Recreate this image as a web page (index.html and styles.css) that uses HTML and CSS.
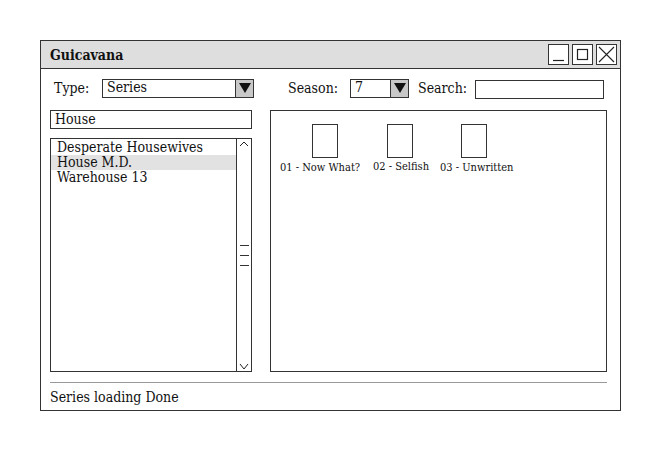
FILE: index.html
```html
<!DOCTYPE html>
<html>
<head>
<meta charset="utf-8">
<link rel="stylesheet" href="styles.css">
</head>
<body>
<div class="window">
  <div class="titlebar">
    <span class="title">Guicavana</span>
    <div class="wbtns">
      <span class="wbtn"><svg width="21" height="21" viewBox="0 0 21 21"><path d="M5 16.5 H16" stroke="#222" stroke-width="1.2" fill="none"/></svg></span>
      <span class="wbtn"><svg width="21" height="21" viewBox="0 0 21 21"><rect x="5.5" y="5.5" width="10" height="10" stroke="#222" stroke-width="1.2" fill="none"/></svg></span>
      <span class="wbtn"><svg width="21" height="21" viewBox="0 0 21 21"><path d="M3 3 L18 18 M18 3 L3 18" stroke="#222" stroke-width="1.1" fill="none"/></svg></span>
    </div>
  </div>
  <div class="body">
    <div class="toolbar">
      <span class="lbl type-lbl">Type:</span>
      <div class="select sel-type"><span class="sel-text">Series</span><span class="arrow"><svg width="14" height="12" viewBox="0 0 14 12"><path d="M1 1 H13 L7 11 Z" fill="#111"/></svg></span></div>
      <span class="lbl season-lbl">Season:</span>
      <div class="select sel-season"><span class="sel-text">7</span><span class="arrow"><svg width="14" height="12" viewBox="0 0 14 12"><path d="M1 1 H13 L7 11 Z" fill="#111"/></svg></span></div>
      <span class="lbl search-lbl">Search:</span>
      <div class="search"></div>
    </div>
    <div class="main">
      <div class="left">
        <div class="filter">House</div>
        <div class="list">
          <div class="items">
            <div class="item">Desperate Housewives</div>
            <div class="item sel">House M.D.</div>
            <div class="item">Warehouse 13</div>
          </div>
          <div class="scroll">
            <svg class="up" width="14" height="10" viewBox="0 0 14 10"><path d="M3 7 L7 3 L11 7" stroke="#222" stroke-width="1" fill="none"/></svg>
            <div class="thumb"><span></span><span></span><span></span></div>
            <svg class="down" width="14" height="10" viewBox="0 0 14 10"><path d="M3 3 L7 8 L11 3" stroke="#222" stroke-width="1" fill="none"/></svg>
          </div>
        </div>
      </div>
      <div class="episodes">
        <div class="ep ep1"><div class="thumbbox"></div><div class="eplbl">01 - Now What?</div></div>
        <div class="ep ep2"><div class="thumbbox"></div><div class="eplbl">02 - Selfish</div></div>
        <div class="ep ep3"><div class="thumbbox"></div><div class="eplbl">03 - Unwritten</div></div>
      </div>
    </div>
    <div class="sep"></div>
    <div class="status">Series loading Done</div>
  </div>
</div>
</body>
</html>
```
FILE: styles.css
```css
* { box-sizing: border-box; }
html, body { margin: 0; padding: 0; background: #fff; }
body {
  font-family: "DejaVu Serif Condensed", "DejaVu Serif", serif;
  font-size: 14px;
  color: #111;
  padding: 40px 0 0 40px;
}
.window {
  width: 581px;
  height: 371px;
  border: 1px solid #333;
  display: flex;
  flex-direction: column;
}
.titlebar {
  height: 28px;
  background: #dedede;
  border-bottom: 1px solid #333;
  display: flex;
  align-items: center;
  justify-content: space-between;
  padding: 0 3px 0 9px;
}
.title { font-weight: bold; font-size: 14px; }
.wbtns { display: flex; gap: 3px; }
.wbtn {
  width: 21px; height: 21px;
  border: 1px solid #333;
  background: #fff;
  display: flex;
  align-items: center;
  justify-content: center;
}
.wbtn svg { display: block; flex: none; }
.body {
  flex: 1;
  display: flex;
  flex-direction: column;
  padding: 9px 13px 0 9px;
}
.toolbar {
  display: flex;
  align-items: center;
  height: 20px;
}
.lbl { white-space: nowrap; }
.type-lbl { margin-left: 4px; width: 48px; }
.select {
  display: flex;
  height: 19px;
  border: 1px solid #333;
  background: #fff;
}
.sel-text { flex: 1; padding-left: 4px; line-height: 15px; }
.arrow {
  width: 18px;
  border-left: 1px solid #333;
  background: #c8c8c8;
  display: flex;
  align-items: center;
  justify-content: center;
}
.sel-type { width: 152px; }
.season-lbl { margin-left: 34px; width: 62px; }
.sel-season { width: 59px; }
.search-lbl { margin-left: 9px; width: 57px; }
.search { width: 129px; height: 19px; border: 1px solid #333; margin-top: 3px; }
.main {
  display: flex;
  gap: 18px;
  margin-top: 12px;
  height: 262px;
}
.left {
  width: 202px;
  display: flex;
  flex-direction: column;
  gap: 9px;
}
.filter {
  height: 19px;
  border: 1px solid #333;
  padding-left: 4px;
  line-height: 16px;
}
.list {
  flex: 1;
  border: 1px solid #333;
  display: flex;
  width: 202px;
}
.items { flex: 1; padding-top: 1px; }
.item { padding-left: 6px; line-height: 15px; }
.item.sel { background: #e2e2e2; }
.scroll {
  width: 15px;
  border-left: 1px solid #333;
  display: flex;
  flex-direction: column;
  align-items: center;
  justify-content: space-between;
}
.scroll svg { display: block; }
.thumb { display: flex; flex-direction: column; gap: 9px; }
.thumb span { display: block; width: 9px; height: 1px; background: #333; }
.episodes {
  flex: 1;
  border: 1px solid #333;
  position: relative;
}
.ep {
  position: absolute;
  top: 13px;
  display: flex;
  flex-direction: column;
  align-items: flex-start;
}
.thumbbox { width: 26px; height: 34px; border: 1px solid #333; }
.eplbl { font-size: 11px; margin-top: 3px; white-space: nowrap; }
.ep1 { left: 9px; }
.ep1 .thumbbox { margin-left: 32px; }
.ep2 { left: 102px; }
.ep2 .thumbbox { margin-left: 14px; }
.ep3 { left: 169px; }
.ep3 .thumbbox { margin-left: 21px; }
.ep2 .eplbl { margin-top: 2px; }
.sep { height: 1px; background: #999; margin-top: 10px; margin-left: 0; }
.status { margin-top: 5px; line-height: 18px; }
```
